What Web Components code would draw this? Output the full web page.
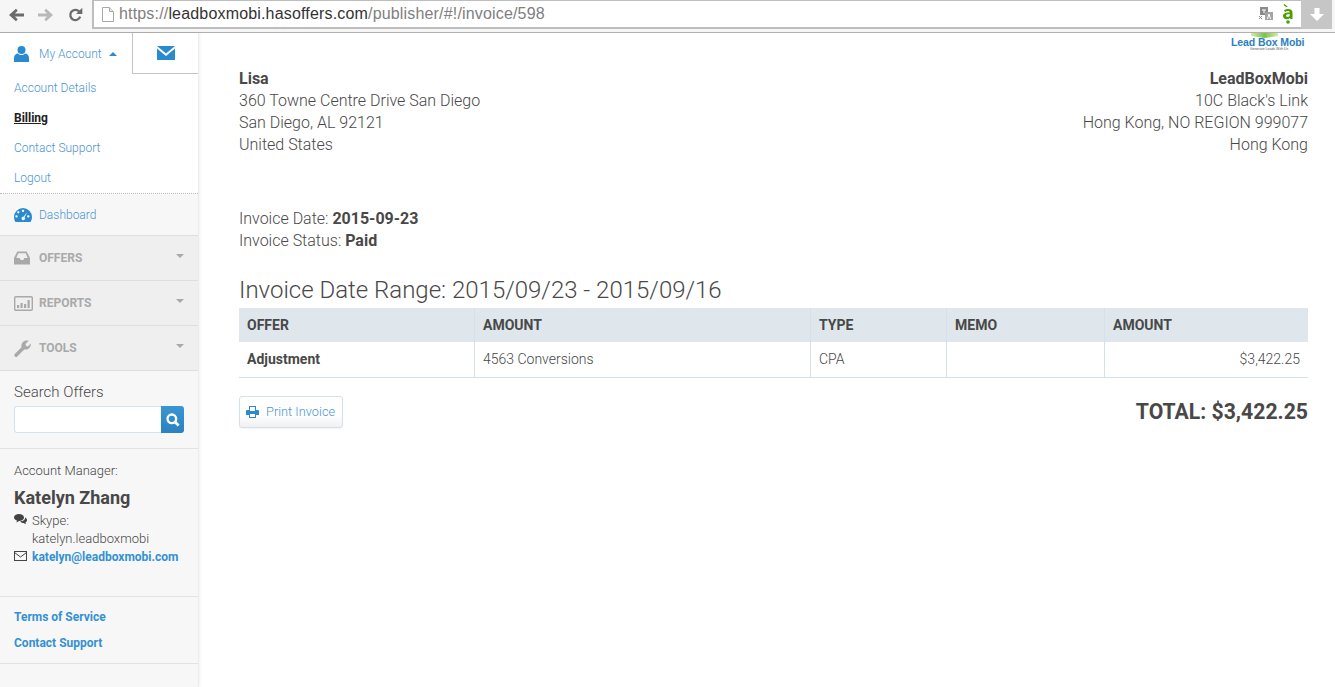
<!DOCTYPE html>
<html>
<head>
<meta charset="utf-8">
<title>Invoice</title>
<style>
html, body { margin: 0; height: 100%; overflow: hidden; background: #fff; }
body { font-family: Roboto, "Liberation Sans", sans-serif; color: #444; display: flex; flex-direction: column; height: 687px; }
.page { display: flex; flex: 1; min-height: 0; }
</style>
</head>
<body>
<browser-bar url-host="leadboxmobi.hasoffers.com" url-path="/publisher/#!/invoice/598"></browser-bar>
<div class="page">
  <side-bar></side-bar>
  <invoice-view></invoice-view>
</div>

<script>
class BrowserBar extends HTMLElement {
  connectedCallback() {
    const root = this.attachShadow({ mode: 'open' });
    root.innerHTML = `
      <style>
        :host { display: flex; align-items: flex-start; height: 33px; box-sizing: border-box; background: #f6f6f6; border-bottom: 1px solid #b0b0b0; padding-right: 3px; flex: none; }
        .nav { display: flex; align-items: center; width: 92px; height: 29px; padding-left: 9px; box-sizing: border-box; flex: none; }
        svg { display: block; flex: none; }
        .omni { flex: 1; display: flex; align-items: center; height: 29px; box-sizing: border-box; background: #fff; border: 1px solid #bdbdbd; border-width: 1px 0 2px 2px; font: 16px "Liberation Sans", sans-serif; letter-spacing: .17px; padding-left: 8px; color: #808080; white-space: nowrap; }
        .omni b { font-weight: 400; color: #333; }
        .doc { margin-right: 5px; }
        .url { flex: 1; }
        .omni .tr { margin-right: 10px; }
        .omni .amz { margin-right: 8px; }
        .dl { width: 31px; height: 29px; background: #c6c6c6; display: flex; align-items: center; justify-content: center; flex: none; }
      </style>
      <div class="nav">
        <svg width="15" height="14" viewBox="0 0 16 14" style="margin-right:14px"><path d="M16 5.400H6.300l3-3L7.400.4 0 7l7.400 6.600 1.900-2-3-3H16z" fill="#6b6b6b"/></svg>
        <svg width="15" height="14" viewBox="0 0 16 14" style="margin-right:15px"><path d="M0 5.400h9.700l-3-3L8.600.4 16 7l-7.400 6.600-1.900-2 3-3H0z" fill="#b8b8b8"/></svg>
        <svg width="15" height="15" viewBox="0 0 15 15"><path d="M12.200 9.700a5.100 5.100 0 1 1-1.100-5.300" fill="none" stroke="#6b6b6b" stroke-width="2.300"/><path d="M14.300 .8v6.300H8z" fill="#6b6b6b"/></svg>
      </div>
      <div class="omni">
        <svg class="doc" width="12" height="15" viewBox="0 0 12 15"><path d="M.5.5h7l4 4v10H.5z" fill="#fff" stroke="#a8a8a8"/><path d="M7.500.5v4h4" fill="#e6e6e6" stroke="#a8a8a8"/></svg>
        <span class="url">https://<b>${this.getAttribute('url-host')}</b>${this.getAttribute('url-path')}</span>
        <svg class="tr" width="14" height="14" viewBox="0 0 14 14"><rect x="1" y="0" width="8" height="8" fill="#8a8a8a"/><rect x="6" y="5" width="8" height="8" fill="#a4a4a4"/><path d="M3 3h4M5 3v3" stroke="#fff"/><path d="M8.500 12l1.500-5 1.500 5" stroke="#fff" fill="none"/><path d="M0 9l3 3M3 9l-3 3" stroke="#8a8a8a"/></svg>
        <svg class="amz" width="10" height="20" viewBox="0 0 10 20"><path fill="#4a9e00" d="M1.500 0l3.500 3H3.200L.5 1zM1 6.500C2 5.500 3.500 5 5 5c3 0 4.500 1.300 4.500 4v6H7.300l-.3-1c-1 .8-2 1.200-3.200 1.200C1.600 15.200 0 14 0 12c0-2.300 2-3.400 6.700-3.600V8.300C6.700 7.500 6 7 4.800 7c-1 0-2 .3-2.800 1zM6.700 10C4 10.200 3 10.800 3 11.800c0 .7.500 1.200 1.400 1.200.8 0 1.700-.4 2.300-1z"/><circle cx="5" cy="18" r="1.800" fill="#4a9e00"/></svg>
      </div>
      <div class="dl"><svg width="14" height="14" viewBox="0 0 14 14"><path d="M4.500 0h5v6H14l-7 7-7-7h4.500z" fill="#fff"/></svg></div>
    `;
  }
}
customElements.define('browser-bar', BrowserBar);

class NavSection extends HTMLElement {
  connectedCallback() {
    const root = this.attachShadow({ mode: 'open' });
    root.innerHTML = `
      <style>
        :host { display: flex; align-items: center; height: 45px; box-sizing: border-box; background: #efefef; border-bottom: 1px solid #dedede; padding: 0 14px; color: #a9a9a9; font-size: 12px; font-weight: 700; }
        .icon { width: 25px; flex: none; display: flex; align-items: center; }
        .label { flex: 1; }
        .caret { width: 0; height: 0; border: 4px solid transparent; border-top-color: #a9a9a9; border-bottom: 0; margin-top: -4px; }
      </style>
      <span class="icon"><slot name="icon"></slot></span>
      <span class="label"><slot></slot></span>
      <span class="caret"></span>
    `;
  }
}
customElements.define('nav-section', NavSection);

class SideBar extends HTMLElement {
  connectedCallback() {
    const root = this.attachShadow({ mode: 'open' });
    root.innerHTML = `
      <style>
        :host { display: block; width: 199px; flex: none; box-sizing: border-box; background: #f7f7f7; border-right: 1px solid #ececec; box-shadow: 1px 0 3px rgba(0,0,0,.06); font-size: 12px; color: #484848; }
        a { color: #3490d3; text-decoration: none; }
        svg { display: block; }
        .tabs { display: flex; height: 41px; background: #fff; }
        .acct { width: 133px; display: flex; align-items: center; padding-left: 14px; box-sizing: border-box; color: #4a94d4; font-weight: 300; border-right: 1px solid #c4c4c4; }
        .acct svg { margin-right: 10px; }
        .acct .up { width: 0; height: 0; border: 4px solid transparent; border-bottom-color: #2a8ad0; border-top: 0; margin-left: 7px; }
        .mail { flex: 1; display: flex; align-items: center; justify-content: center; border-bottom: 1px solid #c4c4c4; background: #fff; }
        .links { background: #fff; padding: 0 14px; height: 119px; border-bottom: 1px dotted #bbb; display: flex; flex-direction: column; font-weight: 300; }
        .links a { display: block; flex: none; height: 30px; line-height: 28px; color: #4a94d4; }
        .links a.on { color: #222; font-weight: 700; text-decoration: underline; }
        .dash { height: 42px; display: flex; align-items: center; padding-left: 14px; border-bottom: 1px solid #dedede; box-sizing: border-box; color: #4a94d4; font-weight: 300; }
        .dash svg { margin-right: 7px; }
        .search { padding: 0 14px; height: 78px; box-sizing: border-box; border-bottom: 1px solid #e2e2e2; }
        .search label { display: block; font-size: 15px; font-weight: 300; padding-top: 11px; line-height: 20px; }
        .box { display: flex; height: 27px; margin-top: 4px; }
        .box i { flex: 1; background: #fff; border: 1px solid #d3e2ee; border-right: 0; border-radius: 3px 0 0 3px; }
        .box span { width: 23px; background: linear-gradient(#3a96d2, #2a82c0); border-radius: 0 3px 3px 0; display: flex; align-items: center; justify-content: center; }
        .mgr { padding: 14px 14px 0; height: 148px; box-sizing: border-box; border-bottom: 1px solid #e2e2e2; }
        .mgr .t { font-size: 13px; font-weight: 300; line-height: 16px; }
        .mgr h3 { margin: 8px 0 0; font-size: 18px; font-weight: 700; line-height: 22px; }
        .row { display: flex; margin-top: 3px; font-size: 13px; }
        .row svg { width: 13px; margin-right: 5px; flex: none; margin-top: 2px; }
        .row div { line-height: 18px; font-weight: 300; }
        .row a { font-weight: 700; line-height: 16px; font-size: 12px; }
        .foot { padding: 7px 14px 0; height: 67px; box-sizing: border-box; border-bottom: 1px solid #e2e2e2; }
        .foot a { display: block; font-weight: 700; line-height: 26px; height: 26px; }
      </style>
      <div class="tabs">
        <div class="acct">
          <svg width="15" height="16" viewBox="0 0 15 16"><circle cx="7.500" cy="4" r="4" fill="#2a8ad0"/><path d="M0 16v-4c0-3 2-4.500 4-4.500 1 1 2.200 1.500 3.500 1.500S10 8.500 11 7.500c2 0 4 1.500 4 4.500v4z" fill="#2a8ad0"/></svg>
          My Account<span class="up"></span>
        </div>
        <div class="mail"><svg width="18" height="14" viewBox="0 0 18 14"><path d="M0 0h18L9 7.500zM0 2.500l9 7.500 9-7.500V14H0z" fill="#2a8ad0"/></svg></div>
      </div>
      <div class="links">
        <a>Account Details</a>
        <a class="on">Billing</a>
        <a>Contact Support</a>
        <a>Logout</a>
      </div>
      <div class="dash">
        <svg width="18" height="14" viewBox="0 0 18 14"><path fill="#2a8ad0" fill-rule="evenodd" d="M9 0a9 9 0 0 1 9 9c0 1.800-.5 3.500-1.400 5H1.400A9.500 9.500 0 0 1 0 9a9 9 0 0 1 9-9zM3.700 8.300a1.200 1.200 0 1 0 0 .1zM5.500 4.200a1.200 1.200 0 1 0 0 .1zM10.200 2.800a1.200 1.200 0 1 0 0 .1zM15.500 8.300a1.200 1.200 0 1 0 0 .1zM13.200 4.300L9.500 8.800a1.700 1.700 0 1 0 1.100.6z"/></svg>
        Dashboard
      </div>
      <nav-section><svg slot="icon" width="16" height="14" viewBox="0 0 17 14"><path fill="#a9a9a9" fill-rule="evenodd" d="M3.500 0h10L17 7v7H0V7zM4.500 2L2.500 7H6l1 2h3l1-2h3.500l-2-5z"/></svg>OFFERS</nav-section>
      <nav-section><svg slot="icon" width="19" height="15" viewBox="0 0 19 15"><rect x=".7" y=".7" width="17.600" height="13.600" rx="1" fill="none" stroke="#a9a9a9" stroke-width="1.400"/><path fill="#a9a9a9" d="M3 9h2.200v3H3zM6.500 7h2.200v5H6.500zM10 8h2.200v4H10zM13.500 4H15.700v8H13.500z"/></svg>REPORTS</nav-section>
      <nav-section><svg slot="icon" width="17" height="17" viewBox="0 0 17 17"><path fill="#a9a9a9" d="M.5 14.200l7-7C6.800 4 8.800.5 13 .5c.7 0 1.200.1 1.700.3L11.500 4l.5 2 2 .5 2.800-3c.4 3.600-2.500 6.600-6.500 6L3 16.800c-.7.500-1.500.4-2-.2s-1-1.600-.5-2.400z"/></svg>TOOLS</nav-section>
      <div class="search">
        <label>Search Offers</label>
        <div class="box"><i></i><span><svg width="14" height="14" viewBox="0 0 12 12"><circle cx="5" cy="5" r="3.700" fill="none" stroke="#fff" stroke-width="2"/><path d="M7.800 7.800l3 3" stroke="#fff" stroke-width="2.400"/></svg></span></div>
      </div>
      <div class="mgr">
        <div class="t">Account Manager:</div>
        <h3>Katelyn Zhang</h3>
        <div class="row">
          <svg height="11" viewBox="0 0 13 11"><path fill="#444" d="M5 0c2.800 0 5 1.500 5 3.500S7.800 7 5 7l-2.500 1.500.4-1.900C1.200 6 0 4.900 0 3.500 0 1.500 2.200 0 5 0zM11 3.500c1.200.5 2 1.500 2 2.700 0 1-.6 1.800-1.500 2.300l.4 1.700-2.300-1.300c-1.500 0-2.800-.6-3.500-1.500 2.800 0 5.400-1.500 4.900-3.900z"/></svg>
          <div>Skype:<br>katelyn.leadboxmobi</div>
        </div>
        <div class="row" style="margin-top:1px">
          <svg height="10" viewBox="0 0 13 10"><rect x=".5" y=".5" width="12" height="9" fill="none" stroke="#444"/><path d="M.5 1.500l6 4.500 6-4.500" fill="none" stroke="#444"/></svg>
          <a>katelyn@leadboxmobi.com</a>
        </div>
      </div>
      <div class="foot">
        <a>Terms of Service</a>
        <a>Contact Support</a>
      </div>
    `;
  }
}
customElements.define('side-bar', SideBar);

class InvoiceView extends HTMLElement {
  connectedCallback() {
    const root = this.attachShadow({ mode: 'open' });
    root.innerHTML = `
      <style>
        :host { display: block; flex: 1; min-width: 0; padding: 0 27px 0 40px; position: relative; font-size: 16px; font-weight: 300; line-height: 22px; color: #484848; }
        b { font-weight: 700; }
        .logo { position: absolute; left: 1032px; top: 0; width: 74px; height: 20px; }
        .logo i { position: absolute; left: 20px; top: 0; width: 27px; height: 5px; background: linear-gradient(90deg, #d6e9a8, #7cc24a 50%, #d6e9a8); clip-path: polygon(0 0, 100% 0, 100% 60%, 50% 100%, 0 60%); }
        .logo span { position: absolute; left: 0; top: 3px; font: 700 10.500px/12px "Liberation Sans", sans-serif; letter-spacing: -.1px; color: #2a7fc0; white-space: nowrap; }
        .logo small { position: absolute; left: 19px; top: 14px; font: 400 3.500px/4px "Liberation Sans", sans-serif; color: #555; white-space: nowrap; }
        .addr { display: flex; justify-content: space-between; padding-top: 35px; }
        .addr div:last-child { text-align: right; }
        .meta { margin-top: 52px; }
        h2 { margin: 22px 0 0; font-size: 24px; line-height: 32px; font-weight: 300; }
        table { width: 100%; border-collapse: collapse; table-layout: fixed; margin-top: 2px; font-size: 14px; line-height: 18px; }
        th { background: #dfe7ec; text-align: left; font-weight: 700; height: 34px; padding: 0 8px; box-sizing: border-box; }
        td { height: 35px; padding: 0 8px; box-sizing: border-box; border-bottom: 1px solid #d5e1ea; }
        th + th, td + td { border-left: 1px solid #d5e1ea; padding-left: 8.500px; }
        .bar { display: flex; justify-content: space-between; align-items: center; margin-top: 18px; }
        .total { font-size: 21.200px; font-weight: 700; }
      </style>
      <div class="logo"><i></i><span>Lead Box Mobi</span><small>Generate Leads With Us</small></div>
      <div class="addr">
        <div><b>Lisa</b><br>360 Towne Centre Drive San Diego<br>San Diego, AL 92121<br>United States</div>
        <div><b>LeadBoxMobi</b><br>10C Black's Link<br>Hong Kong, NO REGION 999077<br>Hong Kong</div>
      </div>
      <div class="meta">Invoice Date: <b>2015-09-23</b><br>Invoice Status: <b>Paid</b></div>
      <h2>Invoice Date Range: 2015/09/23 - 2015/09/16</h2>
      <table>
        <colgroup><col style="width:235px"><col style="width:336px"><col style="width:136px"><col style="width:158px"><col></colgroup>
        <tr><th>OFFER</th><th>AMOUNT</th><th>TYPE</th><th>MEMO</th><th>AMOUNT</th></tr>
        <tr><td><b>Adjustment</b></td><td>4563 Conversions</td><td>CPA</td><td></td><td style="text-align:right">$3,422.25</td></tr>
      </table>
      <div class="bar">
        <print-button>Print Invoice</print-button>
        <div class="total">TOTAL: $3,422.25</div>
      </div>
    `;
  }
}
customElements.define('invoice-view', InvoiceView);

class PrintButton extends HTMLElement {
  connectedCallback() {
    const root = this.attachShadow({ mode: 'open' });
    root.innerHTML = `
      <style>
        :host { display: inline-flex; align-items: center; width: 104px; height: 32px; box-sizing: border-box; padding: 0 0 0 6px; border: 1px solid #d5e1ea; border-radius: 3px; background: linear-gradient(#fff 60%, #f0f0f0); font-size: 12.800px; font-weight: 300; line-height: 18px; color: #4a94d4; box-shadow: 0 1px 1px rgba(0,0,0,.05); white-space: nowrap; }
        svg { margin-right: 7px; display: block; }
      </style>
      <svg width="13" height="12" viewBox="0 0 13 12"><path fill="#2a8ad0" fill-rule="evenodd" d="M3 0h7v4h2a1 1 0 0 1 1 1v4h-3v3H3V9H0V5a1 1 0 0 1 1-1h2zM4 1v4h5V1zM4 8v3h5V8z"/></svg>
      <slot></slot>
    `;
  }
}
customElements.define('print-button', PrintButton);
</script>
</body>
</html>
